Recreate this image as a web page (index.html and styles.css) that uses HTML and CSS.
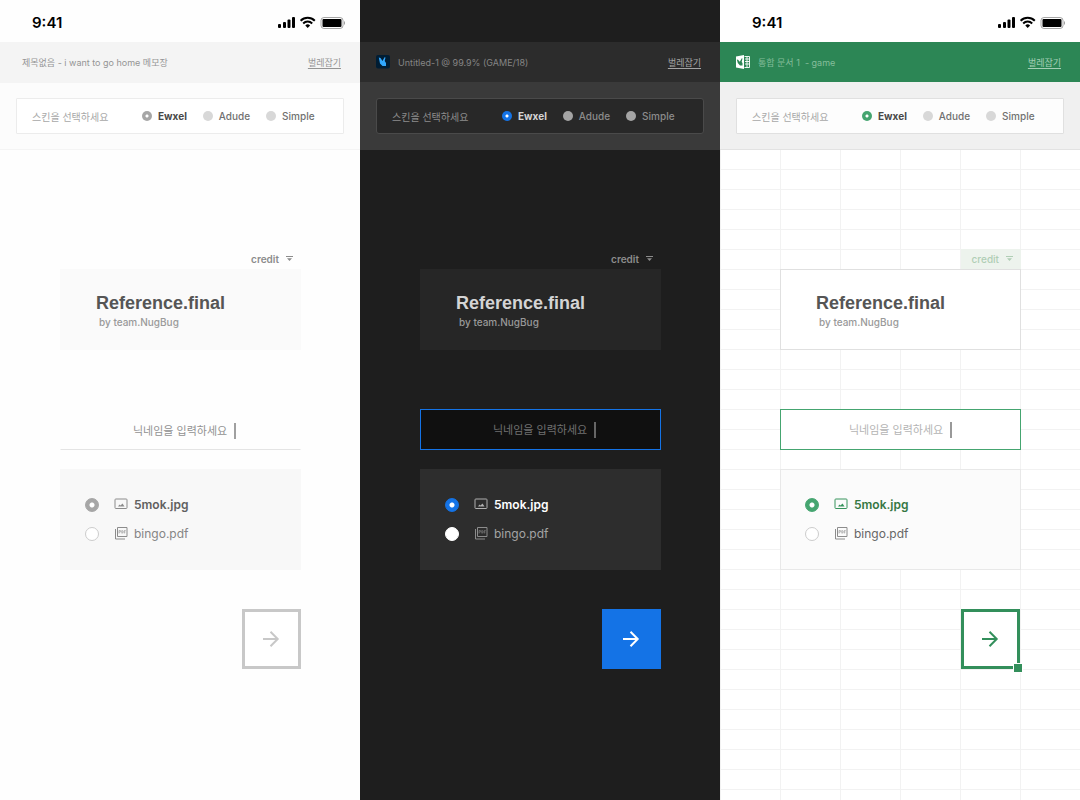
FILE: index.html
```html
<!DOCTYPE html>
<html lang="ko">
<head>
<meta charset="utf-8">
<meta name="viewport" content="width=device-width, initial-scale=1">
<title>Reference.final</title>
<link rel="stylesheet" href="styles.css">
</head>
<body>
<svg class="sprite" aria-hidden="true">
  <symbol id="status" viewBox="0 0 68 14">
    <rect x="0" y="8" width="3" height="4" rx="1"/>
    <rect x="5" y="6" width="3" height="6" rx="1"/>
    <rect x="9.500" y="3.500" width="3" height="8.500" rx="1"/>
    <rect x="14" y="1" width="3" height="11" rx="1"/>
    <g fill="none" stroke="currentColor" stroke-width="2">
      <path d="M22.600 4.700a10 10 0 0 1 14.200 0M25.200 7.500a6.300 6.300 0 0 1 9 0"/>
    </g>
    <path d="M27.300 9.500a3.500 3.500 0 0 1 4.800 0l-2.400 2.500z"/>
    <rect x="43" y="1.500" width="22" height="11" rx="3" fill="none" stroke="currentColor" stroke-opacity=".35"/>
    <path d="M66 5v4q1-.5 1-2t-1-2z" opacity=".4"/>
    <rect x="44.500" y="3" width="19" height="8" rx="1"/>
  </symbol>
  <symbol id="caret" viewBox="0 0 7 6">
    <path d="M0 0h7v1H0zM1 2.300h5L3.500 5z"/>
  </symbol>
  <symbol id="image" viewBox="0 0 14 12">
    <rect x="1" y="1" width="12" height="9.500" rx=".8" fill="none" stroke="currentColor"/>
    <path d="M4 8.500l1.500-2 1 1L8.500 5.500 10.500 8.500z"/>
  </symbol>
  <symbol id="pdf" viewBox="0 0 14 14">
    <path d="M1.500 3v10h9.500M3.500 1.500h9.500v9H3.500z" fill="none" stroke="currentColor" stroke-linejoin="round"/>
    <path d="M5 7.500v-3h1q.8 0 .8.800t-.8.800H5M7.800 4.500v2.700q1.400 0 1.400-1.350t-1.400-1.350M10.300 7.500v-3h1.400M10.300 6h1.200" fill="none" stroke="currentColor" stroke-width=".6"/>
  </symbol>
  <symbol id="arrow" viewBox="0 0 18 18">
    <path d="M0 9h15M7.500 1.800L14.700 9l-7.200 7.200" fill="none" stroke="currentColor" stroke-width="2"/>
  </symbol>
</svg>
<div class="screens">

  <section class="screen memo">
    <div class="status"><span>9:41</span><svg class="status-icons"><use href="#status"/></svg></div>
    <header class="titlebar">
      <h2 class="doc">제목없음 - i want to go home 메모장</h2>
      <a class="bug" href="#bug">벌레잡기</a>
    </header>
    <div class="skinbar">
      <div class="skins" role="radiogroup" aria-labelledby="prompt-a">
        <span class="prompt" id="prompt-a">스킨을 선택하세요</span>
        <label class="skin"><input type="radio" name="skin-a" checked><span>Ewxel</span></label>
        <label class="skin"><input type="radio" name="skin-a"><span>Adude</span></label>
        <label class="skin"><input type="radio" name="skin-a"><span>Simple</span></label>
      </div>
    </div>
    <main class="sheet">
      <button class="credit" type="button">credit <svg><use href="#caret"/></svg></button>
      <div class="card"><h1>Reference.final</h1><p>by team.NugBug</p></div>
      <div class="field"><input type="text" aria-label="닉네임" placeholder="닉네임을 입력하세요"><i class="cursor"></i></div>
      <div class="files">
        <label class="file"><input type="radio" name="file-a" checked><svg><use href="#image"/></svg><span>5mok.jpg</span></label>
        <label class="file"><input type="radio" name="file-a"><svg><use href="#pdf"/></svg><span>bingo.pdf</span></label>
      </div>
      <button class="go" type="button" aria-label="시작"><svg><use href="#arrow"/></svg></button>
    </main>
  </section>

  <section class="screen adude">
    <div class="status"></div>
    <header class="titlebar">
      <svg class="logo" viewBox="0 0 14 14"><rect width="14" height="13.500" rx="2" fill="#001d34"/><path d="M2.800 2.500L4.500 3l2 3L8.500 2.200l1 .2L8.700 6 10 8v3H6.500L4 8.500z" fill="#31a8ff"/></svg>
      <h2 class="doc">Untitled-1 @ 99.9% (GAME/18)</h2>
      <a class="bug" href="#bug">벌레잡기</a>
    </header>
    <div class="skinbar">
      <div class="skins" role="radiogroup" aria-labelledby="prompt-b">
        <span class="prompt" id="prompt-b">스킨을 선택하세요</span>
        <label class="skin"><input type="radio" name="skin-b" checked><span>Ewxel</span></label>
        <label class="skin"><input type="radio" name="skin-b"><span>Adude</span></label>
        <label class="skin"><input type="radio" name="skin-b"><span>Simple</span></label>
      </div>
    </div>
    <main class="sheet">
      <button class="credit" type="button">credit <svg><use href="#caret"/></svg></button>
      <div class="card"><h1>Reference.final</h1><p>by team.NugBug</p></div>
      <div class="field"><input type="text" aria-label="닉네임" placeholder="닉네임을 입력하세요"><i class="cursor"></i></div>
      <div class="files">
        <label class="file"><input type="radio" name="file-b" checked><svg><use href="#image"/></svg><span>5mok.jpg</span></label>
        <label class="file"><input type="radio" name="file-b"><svg><use href="#pdf"/></svg><span>bingo.pdf</span></label>
      </div>
      <button class="go" type="button" aria-label="시작"><svg><use href="#arrow"/></svg></button>
    </main>
  </section>

  <section class="screen ewxel">
    <div class="status"><span>9:41</span><svg class="status-icons"><use href="#status"/></svg></div>
    <header class="titlebar">
      <svg class="logo" viewBox="0 0 14 14"><path d="M0 1.500L8 0v14L0 12.500z" fill="#fff"/><path d="M8.500 1.500h5v11h-5M9 4h4.500M9 6.500h4.500M9 9h4.500M11 1.500v11" fill="none" stroke="#fff" stroke-width=".9"/><path d="M.8 4.500l1.200.2 1.800 2L5.800 3.300l.7.200-.8 3.500.8 1v2.500H4L1.800 8z" fill="#2c8655"/></svg>
      <h2 class="doc">통합 문서 1&nbsp; - game</h2>
      <a class="bug" href="#bug">벌레잡기</a>
    </header>
    <div class="skinbar">
      <div class="skins" role="radiogroup" aria-labelledby="prompt-c">
        <span class="prompt" id="prompt-c">스킨을 선택하세요</span>
        <label class="skin"><input type="radio" name="skin-c" checked><span>Ewxel</span></label>
        <label class="skin"><input type="radio" name="skin-c"><span>Adude</span></label>
        <label class="skin"><input type="radio" name="skin-c"><span>Simple</span></label>
      </div>
    </div>
    <main class="sheet">
      <button class="credit" type="button">credit <svg><use href="#caret"/></svg></button>
      <div class="card"><h1>Reference.final</h1><p>by team.NugBug</p></div>
      <div class="field"><input type="text" aria-label="닉네임" placeholder="닉네임을 입력하세요"><i class="cursor"></i></div>
      <div class="files">
        <label class="file"><input type="radio" name="file-c" checked><svg><use href="#image"/></svg><span>5mok.jpg</span></label>
        <label class="file"><input type="radio" name="file-c"><svg><use href="#pdf"/></svg><span>bingo.pdf</span></label>
      </div>
      <button class="go" type="button" aria-label="시작"><svg><use href="#arrow"/></svg></button>
    </main>
  </section>

</div>
</body>
</html>
```
FILE: styles.css
```css
*, *::after { box-sizing: border-box; }

body {
  margin: 0;
  font-family: Inter, "Noto Sans CJK KR", sans-serif;
  font-size: 10px;
}

h1, h2, p { margin: 0; }

button, input { font: inherit; }

.sprite { position: absolute; width: 0; height: 0; }

.screens {
  display: grid;
  grid-template-columns: repeat(3, 1fr);
  min-height: 100vh;
}

.screen {
  display: flex;
  flex-direction: column;
  background: var(--page);
}

.memo {
  --page: #fefefe;
  --bar: #f4f4f4;
  --bar-edge: #f4f4f4;
  --doc: #949494;
  --bug: #949494;
  --skinbar: #fcfcfc;
  --skinbar-edge: #f4f4f4;
  --box: #ffffff;
  --box-edge: #ececec;
  --box-radius: 1px;
  --prompt: #a8a8a8;
  --accent: #a6a6a6;
  --off: #d8d8d8;
  --skin-on: #484848;
  --skin-text: #707070;
  --credit: #8c8c8c;
  --credit-bg: transparent;
  --card: #fafafa;
  --card-edge: #fafafa;
  --title: #555555;
  --team: #999999;
  --hint: #929292;
  --cursor: #a0a0a0;
  --panel: #f8f8f8;
  --panel-edge: #f8f8f8;
  --ring: #cccccc;
  --icon-on: #8c8c8c;
  --file-on: #606060;
  --file: #858585;
  --go: #c8c8c8;
  --go-bg: #ffffff;
  --arrow: #c8c8c8;
}

.adude {
  --page: #1e1e1e;
  --bar: #2c2c2c;
  --bar-edge: #3a3a3a;
  --doc: #858585;
  --bug: #a4a4a4;
  --skinbar: #3a3a3a;
  --skinbar-edge: #3a3a3a;
  --box: #282828;
  --box-edge: #4a4a4a;
  --box-radius: 3px;
  --prompt: #8c8c8c;
  --accent: #1473e6;
  --off: #a4a4a4;
  --skin-on: #d4d4d4;
  --skin-text: #8c8c8c;
  --credit: #8c8c8c;
  --credit-bg: transparent;
  --card: #262626;
  --card-edge: #262626;
  --title: #d4d4d4;
  --team: #999999;
  --hint: #707070;
  --cursor: #666666;
  --panel: #2d2d2d;
  --panel-edge: #2d2d2d;
  --ring: #ffffff;
  --icon-on: #b0b0b0;
  --file-on: #ffffff;
  --file: #a4a4a4;
  --go: #1473e6;
  --go-bg: #1473e6;
  --arrow: #ffffff;
}

.ewxel {
  --page: #ffffff;
  --bar: #2c8655;
  --bar-edge: #f0f0f0;
  --doc: #85bd9b;
  --bug: #a4cfb5;
  --skinbar: #f0f0f0;
  --skinbar-edge: #e2e2e2;
  --box: #fdfdfd;
  --box-edge: #e0e0e0;
  --box-radius: 1px;
  --prompt: #a8a8a8;
  --accent: #45a570;
  --off: #d8d8d8;
  --skin-on: #484848;
  --skin-text: #707070;
  --credit: #b0ceb5;
  --credit-bg: #edf3ed;
  --card: #ffffff;
  --card-edge: #e0e0e0;
  --title: #555555;
  --team: #999999;
  --hint: #b4b4b4;
  --cursor: #999999;
  --panel: #fbfbfb;
  --panel-edge: #e8e8e8;
  --ring: #cccccc;
  --icon-on: #37945c;
  --file-on: #357743;
  --file: #666666;
  --go: #338f5b;
  --go-bg: #ffffff;
  --arrow: #338f5b;
}

.status {
  display: flex;
  align-items: center;
  justify-content: space-between;
  height: 42px;
  padding: 3px 14px 0 32px;
  color: #000;
  font-size: 15px;
  font-weight: 600;
}

.status-icons { width: 68px; height: 14px; fill: currentColor; }

.titlebar {
  display: flex;
  align-items: center;
  height: 40px;
  padding: 0 19px 0 16px;
  background: var(--bar);
  box-shadow: 0 1px 0 var(--bar-edge);
  z-index: 1;
}

.memo .titlebar { padding-left: 22px; }

.logo { width: 14px; height: 14px; margin-right: 8px; }

.doc {
  flex: 1;
  color: var(--doc);
  font-size: 9px;
  font-weight: 400;
}

.bug {
  color: var(--bug);
  font-size: 9px;
  text-underline-offset: 2px;
}

.skinbar {
  padding: 16px 16px 15px;
  background: var(--skinbar);
  border-bottom: 1px solid var(--skinbar-edge);
}

.skins {
  display: flex;
  align-items: center;
  gap: 16px;
  height: 36px;
  padding: 0 15px;
  background: var(--box);
  border: 1px solid var(--box-edge);
  border-radius: var(--box-radius);
}

.prompt { width: 94px; color: var(--prompt); white-space: nowrap; }

.skin {
  display: flex;
  align-items: center;
  gap: 6px;
  color: var(--skin-text);
  font-weight: 500;
}

.skin:has(:checked) { color: var(--skin-on); font-weight: 700; }

input[type="radio"] {
  appearance: none;
  flex: none;
  margin: 0;
  border-radius: 50%;
}

.skin input { width: 10px; height: 10px; background: var(--off); }

.skin input:checked {
  background: radial-gradient(circle, #fff 1px, var(--accent) 2px);
}

.sheet {
  display: flex;
  flex: 1;
  flex-direction: column;
  padding: 99px 59px 40px 60px;
}

.ewxel .sheet {
  background:
    linear-gradient(90deg, #f2f2f2 1px, transparent 1px) 0 0 / 60px 20px,
    linear-gradient(transparent 19px, #f2f2f2 19px) 0 0 / 60px 20px;
}

.credit {
  display: flex;
  align-items: center;
  align-self: flex-end;
  gap: 7px;
  height: 20px;
  padding: 0 8px 0 11px;
  background: var(--credit-bg);
  border: 0;
  color: var(--credit);
  font-weight: 600;
}

.credit svg { width: 7px; height: 6px; fill: currentColor; }

.ewxel .credit { font-weight: 500; }

.card {
  height: 81px;
  padding: 22px 35px;
  background: var(--card);
  border: 1px solid var(--card-edge);
}

.card h1 {
  color: var(--title);
  font: bold 18px/22px "Liberation Sans", sans-serif;
}

.card p {
  padding: 1px 3px;
  color: var(--team);
  font-weight: 500;
  line-height: 14px;
}

.field {
  display: flex;
  align-items: center;
  justify-content: center;
  gap: 6px;
  height: 41px;
  margin: 59px 0 19px;
  border: 1px solid transparent;
}

.memo .field { padding: 2px 0 0 8px; border-bottom-color: #e4e4e4; }
.adude .field { padding-left: 8px; background: #101010; border-color: var(--accent); }
.ewxel .field { padding-right: 22px; background: #fff; border-color: var(--accent); }
.ewxel .field { padding-right: 0; }

.field input {
  width: 95px;
  padding: 0;
  background: none;
  border: 0;
  outline: 0;
  color: var(--title);
  font-size: 11px;
}

.field input::placeholder { color: var(--hint); opacity: 1; }

.cursor { width: 2px; height: 16px; background: var(--cursor); }

.files {
  display: flex;
  flex-direction: column;
  gap: 9px;
  height: 101px;
  padding: 24px;
  background: var(--panel);
  border: 1px solid var(--panel-edge);
}

.file {
  display: flex;
  align-items: center;
  height: 20px;
  color: var(--file);
  font-size: 12px;
}

.file:has(:checked) { color: var(--file-on); font-weight: 600; }

.file input {
  width: 14px;
  height: 14px;
  margin: 2px 15px 0 0;
  background: #fff;
  border: 1px solid var(--ring);
}

.file input:checked {
  background: radial-gradient(circle, #fff 2px, var(--accent) 3px);
  border-color: var(--accent);
}

.file svg {
  width: 14px;
  height: 14px;
  margin-right: 6px;
  color: #8c8c8c;
  fill: currentColor;
}

.file:has(:checked) svg { color: var(--icon-on); }

.go {
  position: relative;
  display: grid;
  place-items: center;
  align-self: flex-end;
  width: 59px;
  height: 60px;
  margin-top: 39px;
  padding: 0;
  background: var(--go-bg);
  border: 3px solid var(--go);
  color: var(--arrow);
}

.go svg { width: 18px; height: 18px; }

.ewxel .go { margin-right: 1px; }

/* Fill handle of the selected cell */
.ewxel .go::after {
  content: "";
  position: absolute;
  right: -6px;
  bottom: -7px;
  width: 10px;
  height: 10px;
  background: var(--go);
  border: 1px solid #fff;
}
```
